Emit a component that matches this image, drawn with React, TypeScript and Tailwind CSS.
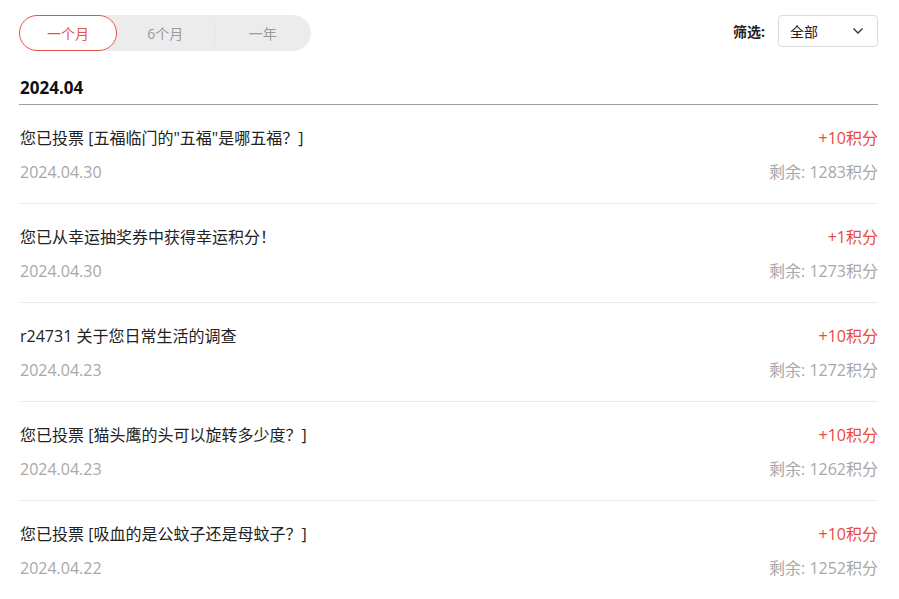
import React, { useState } from 'react';

interface Record {
  title: string;
  date: string;
  points: string;
  balance: string;
}

const records: Record[] = [
  { title: '您已投票 [五福临门的"五福"是哪五福？]', date: '2024.04.30', points: '+10积分', balance: '剩余: 1283积分' },
  { title: '您已从幸运抽奖券中获得幸运积分！', date: '2024.04.30', points: '+1积分', balance: '剩余: 1273积分' },
  { title: 'r24731 关于您日常生活的调查', date: '2024.04.23', points: '+10积分', balance: '剩余: 1272积分' },
  { title: '您已投票 [猫头鹰的头可以旋转多少度？]', date: '2024.04.23', points: '+10积分', balance: '剩余: 1262积分' },
  { title: '您已投票 [吸血的是公蚊子还是母蚊子？]', date: '2024.04.22', points: '+10积分', balance: '剩余: 1252积分' },
];

const tabs = ['一个月', '6个月', '一年'];

export default function App() {
  const [active, setActive] = useState(0);

  return (
    <div className="min-h-screen bg-white pl-[19px] pr-[21px] pt-[15px] font-['Open_Sans','Noto_Sans_CJK_SC',sans-serif] text-[#222]">
      {/* 顶部：时间切换 + 筛选 */}
      <div className="flex items-start justify-between">
        <div className="flex h-[36px] w-[292px] items-center rounded-full bg-[#ececec]">
          {tabs.map((t, i) => (
            <React.Fragment key={t}>
              {i === 2 && <div className="h-[24px] w-px bg-[#e2e2e2]" />}
              <button
                onClick={() => setActive(i)}
                className={
                  i === active
                    ? 'h-full w-[98px] rounded-full border border-[#e5544b] bg-white text-[14px] text-[#e5544b]'
                    : 'h-full flex-1 rounded-full text-[14px] text-[#9a9a9a]'
                }
              >
                {t}
              </button>
            </React.Fragment>
          ))}
        </div>

        <div className="flex items-center">
          <span className="mr-[13px] text-[14px] font-bold text-[#222]">筛选:</span>
          <div className="flex h-[32px] w-[100px] items-center justify-between rounded-[4px] border border-[#dcdcdc] pl-[11px] pr-[13px]">
            <span className="text-[14px] text-[#222]">全部</span>
            <svg width="12" height="8" viewBox="0 0 12 8" fill="none">
              <path d="M1.5 1.5 L6 6 L10.5 1.5" stroke="#333" strokeWidth="1.4" />
            </svg>
          </div>
        </div>
      </div>

      {/* 月份 */}
      <div className="mt-[27px] border-b border-[#9e9e9e] pb-[6px] pl-px text-[17px] font-bold leading-[20px] text-[#111]">
        2024.04
      </div>

      {/* 记录列表 */}
      <div>
        {records.map((r, i) => (
          <div key={i} className="flex justify-between border-b border-[#ececec] pt-[22px] pb-[20px]">
            <div className="flex flex-col gap-[12px] pl-px">
              <div className="text-[16px] leading-[22px] text-[#222]">{r.title}</div>
              <div className="text-[16px] leading-[22px] text-[#a8a8a8]">{r.date}</div>
            </div>
            <div className="flex flex-col items-end gap-[12px]">
              <div className="text-[16px] leading-[22px] text-[#ea4a40]">{r.points}</div>
              <div className="text-[16px] leading-[22px] text-[#a8a8a8]">{r.balance}</div>
            </div>
          </div>
        ))}
      </div>
    </div>
  );
}
